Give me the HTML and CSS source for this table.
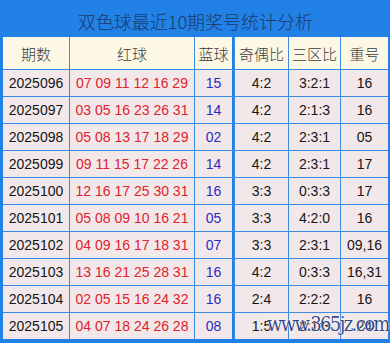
FILE: index.html
```html
<!DOCTYPE html>
<html lang="zh">
<head>
<meta charset="utf-8">
<title>双色球最近10期奖号统计分析</title>
<link rel="stylesheet" href="styles.css">
</head>
<body>
<div class="board">
  <div class="title">双色球最近10期奖号统计分析</div>
  <div class="grid">
    <div class="hd">期数</div><div class="hd">红球</div><div class="hd c3">蓝球</div><div class="hd">奇偶比</div><div class="hd">三区比</div><div class="hd">重号</div>

    <div class="cell">2025096</div><div class="cell red">07 09 11 12 16 29</div><div class="cell blue c3">15</div><div class="cell">4:2</div><div class="cell">3:2:1</div><div class="cell">16</div>
    <div class="cell">2025097</div><div class="cell red">03 05 16 23 26 31</div><div class="cell blue c3">14</div><div class="cell">4:2</div><div class="cell">2:1:3</div><div class="cell">16</div>
    <div class="cell">2025098</div><div class="cell red">05 08 13 17 18 29</div><div class="cell blue c3">02</div><div class="cell">4:2</div><div class="cell">2:3:1</div><div class="cell">05</div>
    <div class="cell">2025099</div><div class="cell red">09 11 15 17 22 26</div><div class="cell blue c3">14</div><div class="cell">4:2</div><div class="cell">2:3:1</div><div class="cell">17</div>
    <div class="cell">2025100</div><div class="cell red">12 16 17 25 30 31</div><div class="cell blue c3">16</div><div class="cell">3:3</div><div class="cell">0:3:3</div><div class="cell">17</div>
    <div class="cell">2025101</div><div class="cell red">05 08 09 10 16 21</div><div class="cell blue c3">05</div><div class="cell">3:3</div><div class="cell">4:2:0</div><div class="cell">16</div>
    <div class="cell">2025102</div><div class="cell red">04 09 16 17 18 31</div><div class="cell blue c3">07</div><div class="cell">3:3</div><div class="cell">2:3:1</div><div class="cell">09,16</div>
    <div class="cell">2025103</div><div class="cell red">13 16 21 25 28 31</div><div class="cell blue c3">16</div><div class="cell">4:2</div><div class="cell">0:3:3</div><div class="cell">16,31</div>
    <div class="cell">2025104</div><div class="cell red">02 05 15 16 24 32</div><div class="cell blue c3">16</div><div class="cell">2:4</div><div class="cell">2:2:2</div><div class="cell">16</div>
    <div class="cell">2025105</div><div class="cell red">04 07 18 24 26 28</div><div class="cell blue c3">08</div><div class="cell">1:5</div><div class="cell">2:1:3</div><div class="cell">24</div>
  </div>
  <span class="mark">www.365jz.com</span>
</div>
</body>
</html>
```

FILE: styles.css
```css
html, body {
  margin: 0;
  padding: 0;
  background: #ffffff;
}

.board {
  position: relative;
  width: 390px;
  box-sizing: border-box;
  background: #2181e6;
  padding: 0 2px 4px 3px;
  font-family: "Liberation Sans", Arial, "Noto Sans CJK SC", sans-serif;
}

.title {
  height: 37px;
  box-sizing: border-box;
  padding-top: 8px;
  text-align: center;
  font-family: "Noto Sans CJK SC", sans-serif;
  font-size: 18px;
  font-weight: 300;
  line-height: 26px;
  color: #1b3a6c;
}

.grid {
  display: grid;
  grid-template-columns: 66px 124px 39px 53px 51px 47px;
  grid-template-rows: 32px;
  grid-auto-rows: 26px;
  column-gap: 1px;
  row-gap: 1px;
  background: #3a8de2;
}

.hd {
  background: #fdf7e5;
  display: flex;
  align-items: center;
  justify-content: center;
  font-family: "Noto Sans CJK SC", sans-serif;
  font-size: 15px;
  font-weight: 300;
  color: #3c3c3c;
}

.cell {
  background: #f3e8e9;
  display: flex;
  align-items: center;
  justify-content: center;
  font-size: 14px;
  color: #151515;
  white-space: nowrap;
}

.c3 {
  border-right: 2px solid #2181e6;
}

.red {
  color: #e0222c;
}

.blue {
  color: #2b2bc4;
}

.mark {
  position: absolute;
  left: 267px;
  top: 312px;
  font-family: "DejaVu Serif", serif;
  font-stretch: condensed;
  font-size: 20px;
  letter-spacing: -1.6px;
  color: rgba(30, 55, 125, 0.92);
  text-shadow: 0 0 1px #ffffff, 0 0 2px #ffffff;
  white-space: nowrap;
}
```
